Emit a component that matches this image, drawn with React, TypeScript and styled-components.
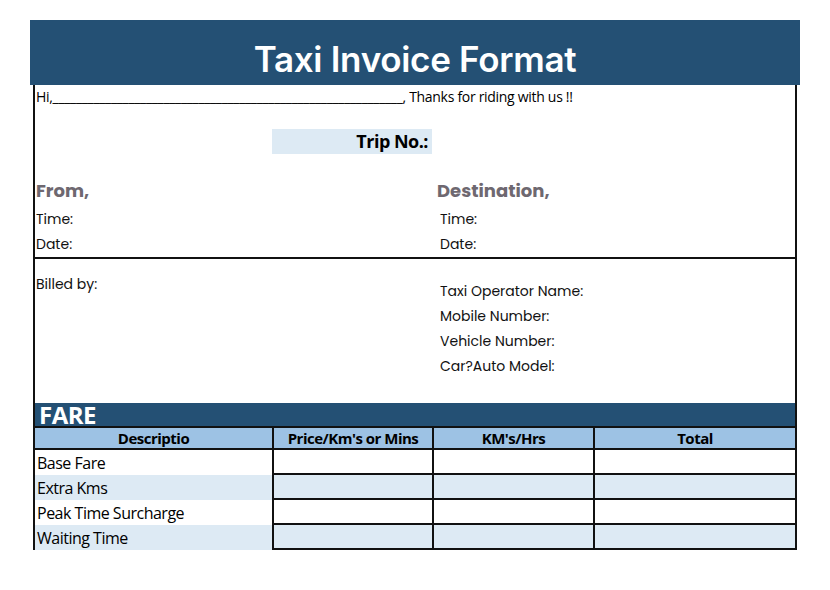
import React from "react";
import styled, { createGlobalStyle } from "styled-components";

const Global = createGlobalStyle`
  body { margin: 0; background: #fff; font-family: "Open Sans", "Liberation Sans", sans-serif; }
`;

const Page = styled.div`
  width: 830px;
  height: 590px;
  padding: 20px 0 0 30px;
  box-sizing: border-box;
`;

const Sheet = styled.div`
  width: 770px;
`;

const TitleBar = styled.div`
  height: 65px;
  background: #245074;
  color: #fff;
  font-family: "Inter", "Noto Sans", sans-serif;
  font-size: 35px;
  font-weight: 600;
  display: flex;
  align-items: center;
  justify-content: center;
  padding-top: 12px;
  box-sizing: border-box;
  letter-spacing: -0.3px;
`;

const Body = styled.div`
  margin: 0 3px 0 3px;
  border-left: 2px solid #111;
  border-right: 2px solid #111;
  display: flex;
  flex-direction: column;
`;

const Greeting = styled.div`
  font-size: 14px;
  padding: 2px 0 0 1px;
  height: 30px;
  letter-spacing: -0.3px;
  white-space: nowrap;
`;

const TripRow = styled.div`
  height: 48px;
  padding-left: 237px;
  display: flex;
  align-items: center;
`;

const TripBox = styled.div`
  width: 160px;
  height: 25px;
  background: #ddeaf4;
  display: flex;
  align-items: center;
  justify-content: flex-end;
  padding-right: 4px;
  box-sizing: border-box;
  font-weight: 700;
  font-size: 18px;
  letter-spacing: -0.5px;
`;

const TwoCol = styled.div`
  display: grid;
  grid-template-columns: 402px 1fr;
  border-bottom: 2px solid #111;
`;

const Col = styled.div<{ $pad?: number }>`
  display: flex;
  flex-direction: column;
  padding-left: ${(p) => p.$pad ?? 1}px;
`;

const Heading = styled.div`
  font-family: "Poppins", "Open Sans", sans-serif;
  font-size: 18px;
  font-weight: 700;
  color: #6e6870;
  height: 38px;
  display: flex;
  align-items: center;
  padding-top: 12px;
  box-sizing: border-box;
`;

const Line = styled.div<{ $h?: number; $indent?: number }>`
  font-family: "Poppins", "Inter", sans-serif;
  font-size: 14px;
  height: ${(p) => p.$h ?? 25}px;
  display: flex;
  align-items: center;
  color: #111;
  padding-left: ${(p) => p.$indent ?? 0}px;
`;

const Gap = styled.div`
  height: 4px;
`;

const Billed = styled.div`
  height: 144px;
  display: grid;
  grid-template-columns: 404px 1fr;
  padding-top: 15px;
  box-sizing: border-box;
`;

const FareBar = styled.div`
  height: 23px;
  background: #245074;
  color: #fff;
  font-size: 24px;
  font-weight: 700;
  line-height: 23px;
  padding-left: 4px;
  margin: 0 3px;
  border-left: 2px solid #111;
  border-right: 2px solid #111;
  letter-spacing: -0.5px;
`;

const Table = styled.div`
  margin: 0 3px;
  display: grid;
  grid-template-columns: 237px 160px 161px 1fr;
  border-left: 2px solid #111;
  border-right: 2px solid #111;
`;

const HeadCell = styled.div`
  background: #9dc2e4;
  font-size: 15px;
  font-weight: 700;
  height: 24px;
  display: flex;
  align-items: center;
  justify-content: center;
  border-top: 2px solid #111;
  border-left: 2px solid #111;
  border-bottom: 2px solid #111;
  box-sizing: border-box;
  letter-spacing: -0.5px;
  &:first-child { border-left: none; }
`;

const DescCell = styled.div<{ $alt: boolean }>`
  background: ${(p) => (p.$alt ? "#ddeaf4" : "#fff")};
  font-size: 16px;
  height: 25px;
  display: flex;
  align-items: center;
  padding-left: 2px;
  letter-spacing: -0.5px;
`;

const ValCell = styled.div<{ $alt: boolean }>`
  background: ${(p) => (p.$alt ? "#ddeaf4" : "#fff")};
  height: 25px;
  box-sizing: border-box;
  border-left: 2px solid #111;
  border-bottom: 2px solid #111;
`;

const rows = ["Base Fare", "Extra Kms", "Peak Time Surcharge", "Waiting Time"];

export default function App() {
  return (
    <Page>
      <Global />
      <Sheet>
        <TitleBar>Taxi Invoice Format</TitleBar>
        <Body>
          <Greeting>Hi,____________________________________________________________,  Thanks for riding with us !!</Greeting>
          <TripRow>
            <TripBox>Trip No.:</TripBox>
          </TripRow>
          <TwoCol>
            <Col>
              <Heading>From,</Heading>
              <Gap />
              <Line>Time:</Line>
              <Line>Date:</Line>
            </Col>
            <Col $pad={0}>
              <Heading>Destination,</Heading>
              <Gap />
              <Line $indent={3}>Time:</Line>
              <Line $indent={3}>Date:</Line>
            </Col>
          </TwoCol>
          <Billed>
            <Col>
              <Line $h={20}>Billed by:</Line>
            </Col>
            <Col>
              <Line style={{ marginTop: 5 }}>Taxi Operator Name:</Line>
              <Line>Mobile Number:</Line>
              <Line>Vehicle Number:</Line>
              <Line>Car?Auto Model:</Line>
            </Col>
          </Billed>
        </Body>
        <FareBar>FARE</FareBar>
        <Table>
          <HeadCell>Descriptio</HeadCell>
          <HeadCell>Price/Km's or Mins</HeadCell>
          <HeadCell>KM's/Hrs</HeadCell>
          <HeadCell>Total</HeadCell>
          {rows.map((r, i) => (
            <React.Fragment key={r}>
              <DescCell $alt={i % 2 === 1}>{r}</DescCell>
              <ValCell $alt={i % 2 === 1} />
              <ValCell $alt={i % 2 === 1} />
              <ValCell $alt={i % 2 === 1} />
            </React.Fragment>
          ))}
        </Table>
      </Sheet>
    </Page>
  );
}
